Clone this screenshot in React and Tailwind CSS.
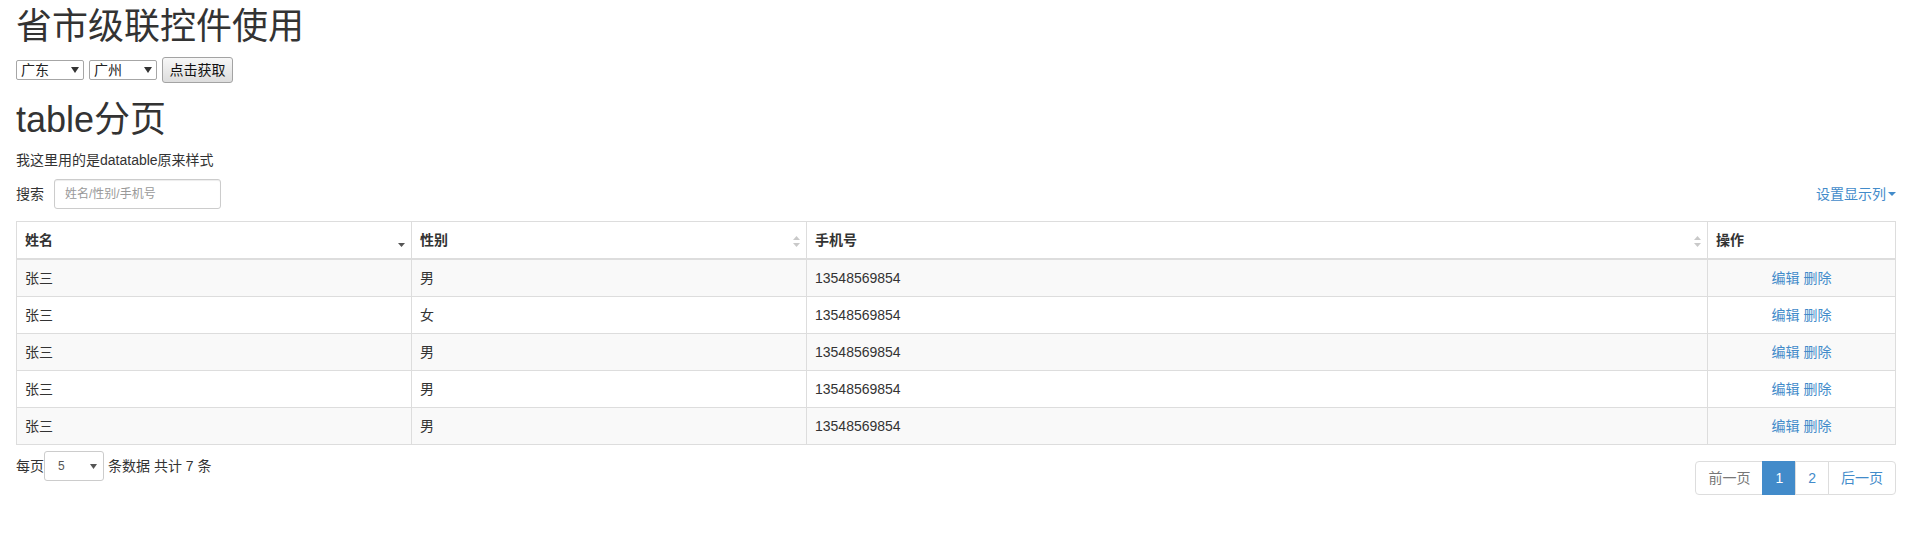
import React from "react";

const FONT = { fontFamily: '"Liberation Sans", "Noto Sans CJK SC", sans-serif' };

function SortBoth() {
  return (
    <svg width="7" height="11" viewBox="0 0 7 11" className="absolute right-[6px] top-[14px]">
      <polygon points="0,4 3.5,0 7,4" fill="#c9c9c9" />
      <polygon points="0,7 7,7 3.5,11" fill="#c9c9c9" />
    </svg>
  );
}

function SortDesc() {
  return (
    <svg width="7" height="11" viewBox="0 0 7 11" className="absolute right-[6px] top-[14px]">
      <polygon points="0,7 7,7 3.5,11" fill="#555555" />
    </svg>
  );
}

function OldSelect({ label }) {
  return (
    <div className="flex items-center justify-between w-[68px] h-[20px] border border-[#a6a6a6] rounded-[2px] bg-white pl-[4px] pr-[4px] text-[14px] leading-[18px] text-[#222]">
      <span>{label}</span>
      <svg width="8" height="6" viewBox="0 0 8 6">
        <polygon points="0,0 8,0 4,6" fill="#333" />
      </svg>
    </div>
  );
}

const rows = [
  { name: "张三", sex: "男", phone: "13548569854" },
  { name: "张三", sex: "女", phone: "13548569854" },
  { name: "张三", sex: "男", phone: "13548569854" },
  { name: "张三", sex: "男", phone: "13548569854" },
  { name: "张三", sex: "男", phone: "13548569854" },
];

export default function App() {
  return (
    <div className="bg-white min-h-[549px] pl-4 pr-[11px] text-[14px] leading-[20px] text-[#333]" style={FONT}>
      <h1 className="pt-[7px] text-[36px] leading-[39.6px] font-normal mb-[10px]">省市级联控件使用</h1>
      <div className="flex items-center h-[26px]">
        <OldSelect label="广东" />
        <div className="w-[5px]" />
        <OldSelect label="广州" />
        <div className="w-[5px]" />
        <div className="h-[26px] w-[71px] flex items-center justify-center border border-[#a3a3a3] rounded-[3px] bg-gradient-to-b from-[#f7f7f7] to-[#dddddd] text-[14px] text-[#111]">
          点击获取
        </div>
      </div>
      <h1 className="mt-[17px] text-[36px] leading-[39.6px] font-normal mb-[11px]">table分页</h1>
      <p className="mb-[9px]">我这里用的是datatable原来样式</p>
      <div className="flex items-center justify-between h-[30px]">
        <div className="flex items-center">
          <span>搜索</span>
          <div className="ml-[10px] w-[167px] h-[30px] border border-[#ccc] rounded-[3px] flex items-center px-[10px] text-[12px] text-[#999] shadow-[inset_0_1px_1px_rgba(0,0,0,0.075)]">
            姓名/性别/手机号
          </div>
        </div>
        <a className="flex items-center text-[#428bca] cursor-pointer">
          设置显示列
          <span className="ml-[2px] w-0 h-0 border-t-[4px] border-t-[#428bca] border-x-[4px] border-x-transparent" />
        </a>
      </div>

      <table className="mt-[12px] w-full table-fixed border-collapse border border-[#ddd]">
        <colgroup>
          <col className="w-[395px]" />
          <col className="w-[395px]" />
          <col />
          <col className="w-[188px]" />
        </colgroup>
        <thead>
          <tr>
            <th className="relative text-left font-bold p-[8px] border border-[#ddd] border-b-2 text-[#333]">
              姓名
              <SortDesc />
            </th>
            <th className="relative text-left font-bold p-[8px] border border-[#ddd] border-b-2 text-[#333]">
              性别
              <SortBoth />
            </th>
            <th className="relative text-left font-bold p-[8px] border border-[#ddd] border-b-2 text-[#333]">
              手机号
              <SortBoth />
            </th>
            <th className="text-left font-bold p-[8px] border border-[#ddd] border-b-2 text-[#333]">操作</th>
          </tr>
        </thead>
        <tbody>
          {rows.map((r, i) => (
            <tr key={i} className={i % 2 === 0 ? "bg-[#f9f9f9]" : "bg-white"}>
              <td className="p-[8px] border border-[#ddd]">{r.name}</td>
              <td className="p-[8px] border border-[#ddd]">{r.sex}</td>
              <td className="p-[8px] border border-[#ddd]">{r.phone}</td>
              <td className="p-[8px] border border-[#ddd] text-center text-[#428bca]">
                <a>编辑</a> <a>删除</a>
              </td>
            </tr>
          ))}
        </tbody>
      </table>

      <div className="flex justify-between items-start">
        <div className="mt-[6px] flex items-center h-[30px]">
          <span>每页</span>
          <div className="w-[60px] h-[30px] border border-[#ccc] rounded-[3px] flex items-center justify-between pl-[13px] pr-[6px] text-[12px] text-[#555] bg-white">
            <span>5</span>
            <svg width="7" height="5" viewBox="0 0 7 5">
              <polygon points="0,0 7,0 3.5,5" fill="#555" />
            </svg>
          </div>
          <span className="ml-[4px]">条数据 共计 7 条</span>
        </div>
        <div className="mt-[16px] flex">
          <span className="px-[12px] py-[6px] border border-[#ddd] rounded-l-[4px] text-[#777] bg-white">前一页</span>
          <span className="-ml-px px-[12px] py-[6px] border border-[#428bca] bg-[#428bca] text-white">1</span>
          <span className="-ml-px px-[12px] py-[6px] border border-[#ddd] text-[#428bca] bg-white">2</span>
          <span className="-ml-px px-[12px] py-[6px] border border-[#ddd] rounded-r-[4px] text-[#428bca] bg-white">后一页</span>
        </div>
      </div>
    </div>
  );
}
